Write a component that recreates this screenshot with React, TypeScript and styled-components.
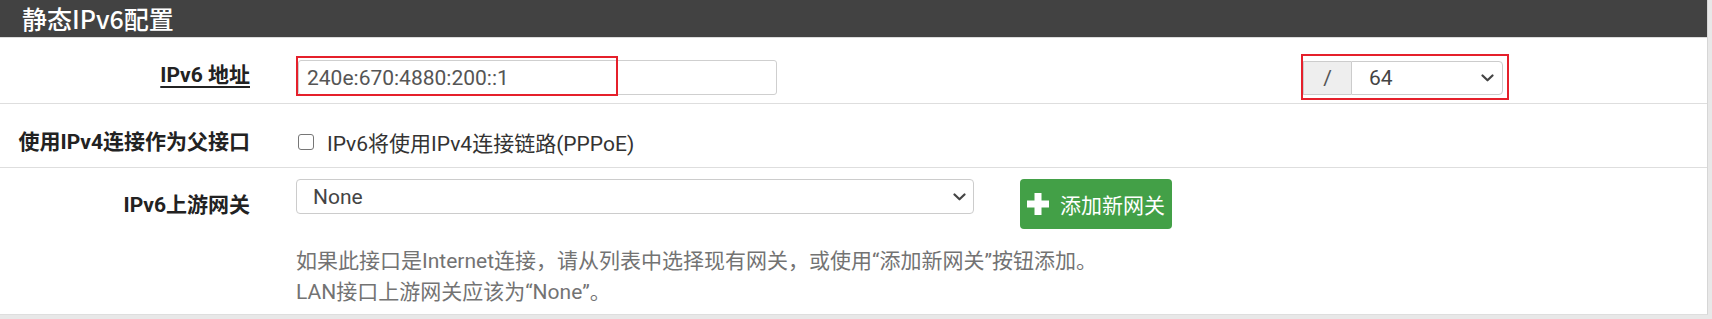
import styled, {createGlobalStyle} from 'styled-components';

const GlobalStyle = createGlobalStyle`
  html, body {
    margin: 0;
    padding: 0;
    background: #e8e8e8;
  }
  body {
    font-family: Roboto, "Noto Sans CJK SC", sans-serif;
    font-size: 21px;
    color: #333;
  }
`;

const ChevronDown = () => (
  <svg width="13" height="8" viewBox="0 0 13 8">
    <path d="M1.5 1.5 L6.5 6.3 L11.5 1.5" fill="none" stroke="#444" strokeWidth="2.2" strokeLinecap="round" strokeLinejoin="round" />
  </svg>
);

const PlusIcon = () => (
  <svg width="24" height="24" viewBox="0 0 24 24">
    <path d="M12 1 V23 M1 12 H23" stroke="#fff" strokeWidth="7" />
  </svg>
);

const App = () => {
  return (
    <>
      <GlobalStyle />
      <Panel>
        <Heading>静态IPv6配置</Heading>

        <Row $pad="22px 0 8px">
          <Label $top={0}>
            <u>IPv6 地址</u>
          </Label>
          <Inline>
            <Marked>
              <TextInput defaultValue="240e:670:4880:200::1" />
              <Mark $l={-2} $t={-4} $w={322} $h={40} />
            </Marked>
            <Marked $gap={526}>
              <Group>
                <Addon>/</Addon>
                <SelectBox $w={152} $h={34} $pl={17} $pr={8}>
                  <span>64</span>
                  <ChevronDown />
                </SelectBox>
              </Group>
              <Mark $l={-2} $t={-6} $w={208} $h={46} />
            </Marked>
          </Inline>
        </Row>

        <Row $pad="23px 0 10px">
          <Label $top={0}>使用IPv4连接作为父接口</Label>
          <CheckLine>
            <Check type="checkbox" />
            <span>IPv6将使用IPv4连接链路(PPPoE)</span>
          </CheckLine>
        </Row>

        <Row $pad="11px 0 6px" $last>
          <Label $top={11}>IPv6上游网关</Label>
          <div>
            <Inline>
              <SelectBox $w={678} $h={35} $pl={16} $pr={7}>
                <span>None</span>
                <ChevronDown />
              </SelectBox>
              <AddButton>
                <PlusIcon />
                <span>添加新网关</span>
              </AddButton>
            </Inline>
            <Help>
              如果此接口是Internet连接，请从列表中选择现有网关，或使用“添加新网关”按钮添加。
              <br />
              LAN接口上游网关应该为“None”。
            </Help>
          </div>
        </Row>
      </Panel>
    </>
  );
};

const Panel = styled.div`
  width: 1707px;
  background: #fff;
  border-right: 1px solid #d6d6d6;
  border-bottom: 1px solid #dedede;
`;

const Heading = styled.h2`
  margin: 0;
  height: 37px;
  padding-left: 22px;
  background: #424242;
  border-bottom: 1px solid #dcdcdc;
  color: #fff;
  font-family: "Noto Sans CJK SC", sans-serif;
  font-size: 25px;
  font-weight: 500;
  line-height: 36px;
`;

const Row = styled.div<{$pad: string; $last?: boolean}>`
  display: grid;
  grid-template-columns: 250px 1fr;
  column-gap: 46px;
  align-items: start;
  padding: ${(p) => p.$pad};
  border-bottom: ${(p) => (p.$last ? 'none' : '1px solid #dedede')};
`;

const Label = styled.div<{$top: number}>`
  margin-top: ${(p) => p.$top}px;
  text-align: right;
  font-weight: 700;
  color: #222;
  line-height: 30px;
  white-space: nowrap;

  u {
    text-decoration-thickness: 2px;
    text-underline-offset: 4px;
  }
`;

const Inline = styled.div`
  display: flex;
  align-items: flex-start;
`;

const Marked = styled.div<{$gap?: number}>`
  position: relative;
  margin-left: ${(p) => p.$gap ?? 2}px;
`;

const Mark = styled.span<{$l: number; $t: number; $w: number; $h: number}>`
  position: absolute;
  left: ${(p) => p.$l}px;
  top: ${(p) => p.$t}px;
  width: ${(p) => p.$w}px;
  height: ${(p) => p.$h}px;
  box-sizing: border-box;
  border: 2px solid #e5202b;
  pointer-events: none;
`;

const TextInput = styled.input`
  display: block;
  box-sizing: border-box;
  width: 479px;
  height: 35px;
  padding: 0 8px;
  border: 1px solid #cfcfcf;
  border-radius: 3px;
  font-family: Roboto, sans-serif;
  font-size: 21px;
  color: #555;
  outline: none;
`;

const Group = styled.div`
  display: flex;
  margin-top: 1px;
`;

const Addon = styled.span`
  box-sizing: border-box;
  width: 48px;
  height: 34px;
  display: flex;
  align-items: center;
  justify-content: center;
  background: #eee;
  border: 1px solid #ccc;
  border-right: none;
  color: #555;
  font-size: 21px;
`;

const SelectBox = styled.div<{$w: number; $h: number; $pl: number; $pr: number}>`
  box-sizing: border-box;
  width: ${(p) => p.$w}px;
  height: ${(p) => p.$h}px;
  display: flex;
  align-items: center;
  justify-content: space-between;
  padding: 0 ${(p) => p.$pr}px 0 ${(p) => p.$pl}px;
  border: 1px solid #ccc;
  border-radius: 4px;
  background: #fff;
  color: #444;
  font-size: 21px;

  ${Group} & {
    border-radius: 0 4px 4px 0;
  }
`;

const AddButton = styled.button`
  box-sizing: border-box;
  width: 152px;
  height: 50px;
  margin-left: 46px;
  display: flex;
  align-items: center;
  gap: 10px;
  padding: 0 0 0 6px;
  border: none;
  border-radius: 4px;
  background: #43a047;
  color: #fff;
  font-family: Roboto, "Noto Sans CJK SC", sans-serif;
  font-size: 21px;

  svg {
    flex-shrink: 0;
  }
`;

const CheckLine = styled.label`
  display: flex;
  align-items: center;
  gap: 13px;
  height: 30px;
  padding-left: 2px;
  color: #333;
`;

const Check = styled.input`
  appearance: none;
  margin: 0;
  width: 16px;
  height: 16px;
  border: 1px solid #767676;
  border-radius: 3px;
  background: #fff;
`;

const Help = styled.div`
  margin-top: 17px;
  color: #737373;
  line-height: 31px;
`;

export default App;
